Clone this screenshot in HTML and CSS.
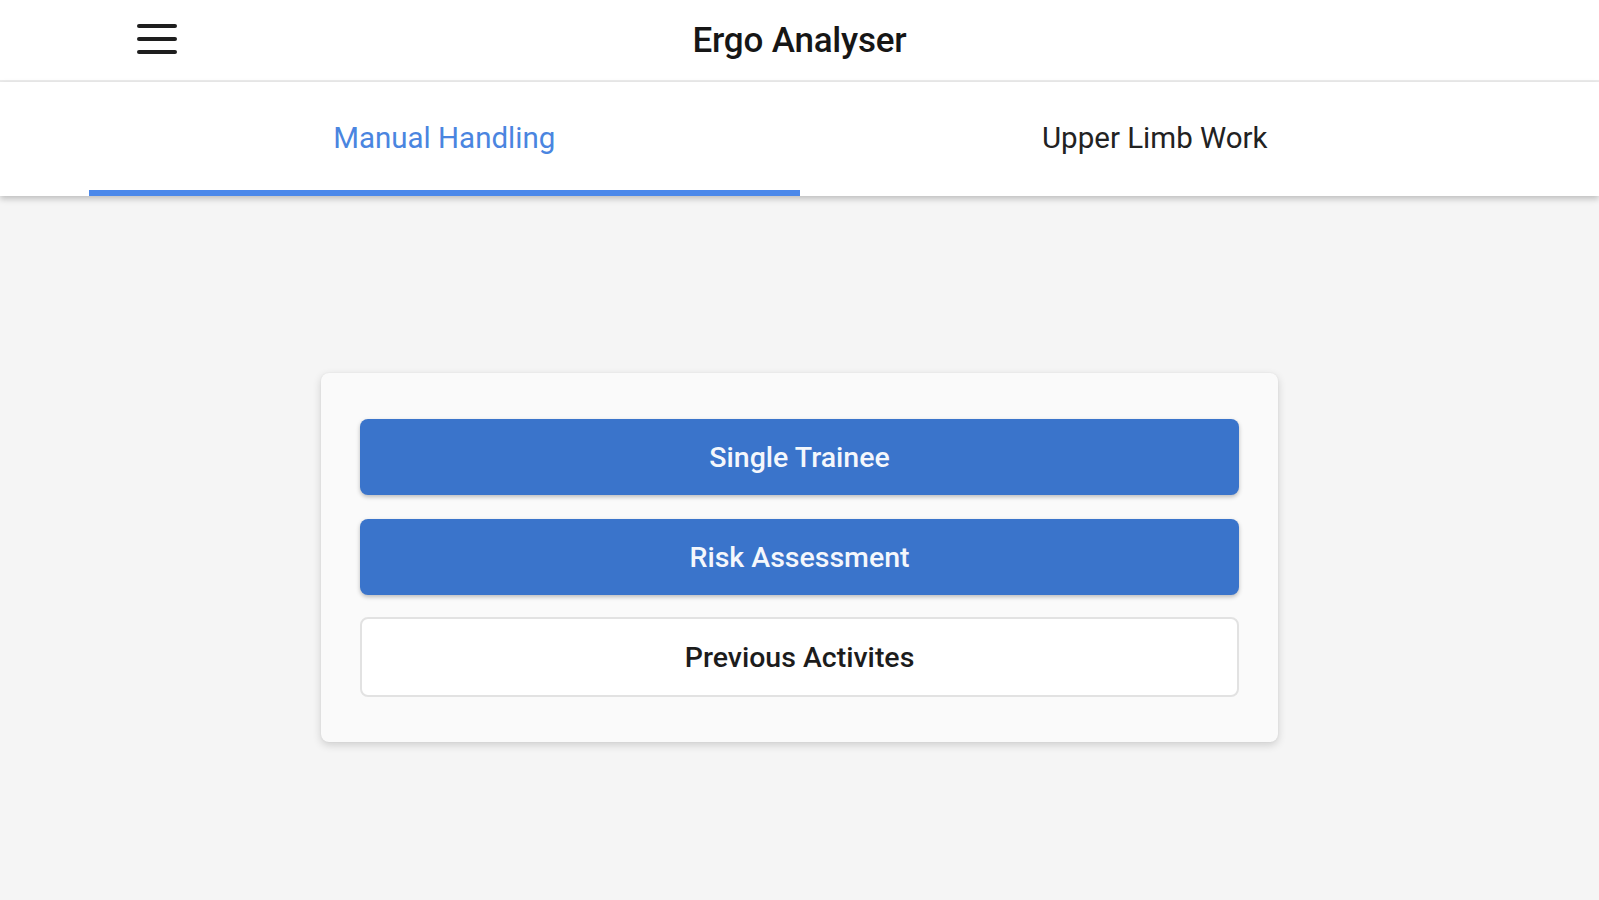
FILE: index.html
```html
<!DOCTYPE html>
<html lang="en">
<head>
<meta charset="utf-8">
<title>Ergo Analyser</title>
<link rel="stylesheet" href="styles.css">
</head>
<body>
<header class="topbar">
  <button class="menu-btn" aria-label="Menu">
    <svg width="40" height="32" viewBox="0 0 40 32"><rect x="0" y="1" width="40" height="4" rx="2"/><rect x="0" y="14" width="40" height="4" rx="2"/><rect x="0" y="27" width="40" height="4" rx="2"/></svg>
  </button>
  <h1 class="title">Ergo Analyser</h1>
</header>
<nav class="tabs">
  <div class="tab active">Manual Handling</div>
  <div class="tab">Upper Limb Work</div>
</nav>
<main class="main">
  <section class="card">
    <button class="btn primary">Single Trainee</button>
    <button class="btn primary">Risk Assessment</button>
    <button class="btn outline">Previous Activites</button>
  </section>
</main>
</body>
</html>
```

FILE: styles.css
```css
* { box-sizing: border-box; }
html, body { margin: 0; height: 100%; }
body {
  background: #f5f5f5;
  font-family: Roboto, "Liberation Sans", Arial, sans-serif;
  color: #1c1c1c;
  overflow: hidden;
}
.topbar {
  height: 82px;
  background: #fff;
  border-bottom: 2px solid #ececec;
  display: flex;
  align-items: center;
  justify-content: center;
  position: relative;
}
.menu-btn {
  position: absolute;
  left: 137px;
  top: 23px;
  width: 40px;
  height: 32px;
  padding: 0;
  border: 0;
  background: none;
  display: block;
}
.menu-btn svg { display: block; fill: #1e1e1e; }
.title {
  margin: 0;
  font-size: 35px;
  font-weight: 500;
  letter-spacing: -0.2px;
  color: #161616;
  line-height: 1;
  margin-top: 0;
}
.tabs {
  height: 114px;
  background: #fff;
  display: flex;
  padding: 0 89px;
  box-shadow: 0 3px 6px rgba(0,0,0,0.22);
  position: relative;
}
.tab {
  flex: 1;
  display: flex;
  align-items: center;
  justify-content: center;
  font-size: 29.5px;
  font-weight: 400;
  color: #222;
  padding-top: 4px;
  border-bottom: 6px solid transparent;
}
.tab.active {
  color: #4a85e0;
  border-bottom-color: #4b88ea;
}
.main {
  display: flex;
  justify-content: center;
  padding-top: 177px;
}
.card {
  width: 957px;
  background: #fafafa;
  border-radius: 8px;
  box-shadow: 0 3px 8px rgba(0,0,0,0.16), 0 0 2px rgba(0,0,0,0.06);
  padding: 46px 39px 45px;
  display: flex;
  flex-direction: column;
  gap: 24px;
}
.btn {
  height: 76px;
  border-radius: 8px;
  font-family: Roboto, "Liberation Sans", Arial, sans-serif;
  font-size: 28.5px;
  font-weight: 500;
  cursor: pointer;
}
.btn.primary {
  background: #3a74cb;
  color: #f4f7fc;
  border: 0;
  box-shadow: 0 2px 4px rgba(0,0,0,0.25);
}
.btn.outline {
  height: 80px;
  background: #fff;
  color: #1c1c1c;
  border: 2px solid #e2e2e2;
  margin-top: -2px;
}
```
